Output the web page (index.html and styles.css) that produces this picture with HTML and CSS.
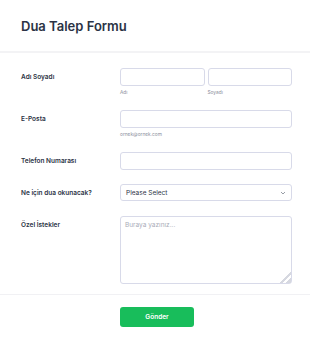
FILE: index.html
```html
<!DOCTYPE html>
<html lang="tr">
<head>
    <meta charset="UTF-8">
    <meta name="viewport" content="width=device-width, initial-scale=1.0">
    <link rel="stylesheet" href="styles.css">
</head>
<body>
    <div class="form-header">
        <h1>Dua Talep Formu</h1>
    </div>

    <form class="form-body">
        <div class="form-row">
            <label class="form-label">Adı Soyadı</label>
            <div class="form-field name-field">
                <div class="name-part">
                    <input type="text" class="form-input">
                    <span class="sublabel">Adı</span>
                </div>
                <div class="name-part">
                    <input type="text" class="form-input">
                    <span class="sublabel">Soyadı</span>
                </div>
            </div>
        </div>

        <div class="form-row">
            <label class="form-label">E-Posta</label>
            <div class="form-field">
                <input type="email" class="form-input">
                <span class="sublabel">ornek@ornek.com</span>
            </div>
        </div>

        <div class="form-row">
            <label class="form-label">Telefon Numarası</label>
            <div class="form-field">
                <input type="tel" class="form-input">
            </div>
        </div>

        <div class="form-row">
            <label class="form-label">Ne için dua okunacak?</label>
            <div class="form-field">
                <div class="form-select">
                    <span>Please Select</span>
                    <svg class="chevron" width="6" height="4" viewBox="0 0 6 4">
                        <path d="M1 1 L3 3 L5 1" fill="none" stroke="#6b7280" stroke-width="0.7"/>
                    </svg>
                </div>
            </div>
        </div>

        <div class="form-row">
            <label class="form-label">Özel İstekler</label>
            <div class="form-field">
                <textarea class="form-textarea" placeholder="Buraya yazınız..."></textarea>
            </div>
        </div>
    </form>

    <div class="form-footer">
        <button class="submit-button" type="button">Gönder</button>
    </div>
</body>
</html>
```

FILE: styles.css
```css
* {
    margin: 0;
    padding: 0;
    box-sizing: border-box;
    font-family: 'Inter', 'Noto Sans', sans-serif;
}
body {
    background: #ffffff;
    color: #2c3345;
    width: 310px;
}

/* Header */
.form-header {
    height: 53px;
    padding: 16px 21px 0;
    border-bottom: 2px solid #f3f3f5;
}
.form-header h1 {
    font-size: 13px;
    font-weight: 600;
    line-height: 20px;
    color: #2c3345;
}

/* Rows */
.form-body {
    padding: 15px 18px 10px 21px;
    border-bottom: 1px solid #f1f1f4;
}
.form-row {
    display: flex;
    margin-bottom: 14px;
}
.form-row:last-child {
    margin-bottom: 0;
}
.form-label {
    width: 99px;
    flex-shrink: 0;
    font-size: 6.5px;
    font-weight: 600;
    line-height: 18px;
    color: #2c3345;
}
.form-field {
    flex: 1;
    display: flex;
    flex-direction: column;
}
.name-field {
    flex-direction: row;
    gap: 3px;
}
.name-part {
    flex: 1;
    display: flex;
    flex-direction: column;
}
.form-input {
    height: 18px;
    width: 100%;
    border: 1px solid #d8dae9;
    border-radius: 3px;
    background: #fff;
    outline: none;
}
.sublabel {
    font-size: 4.8px;
    color: #8a8e9c;
    line-height: 7px;
    margin-top: 3px;
}

/* Select */
.form-select {
    height: 17px;
    border: 1px solid #d8dae9;
    border-radius: 3px;
    display: flex;
    align-items: center;
    justify-content: space-between;
    padding: 0 5px;
    font-size: 6.5px;
    color: #2c3345;
}
.chevron {
    display: block;
}

/* Textarea */
.form-textarea {
    display: block;
    height: 68px;
    width: 100%;
    border: 1px solid #d8dae9;
    border-radius: 3px;
    padding: 4px 4px;
    font-size: 6.5px;
    color: #2c3345;
    resize: vertical;
    outline: none;
}
.form-textarea::placeholder {
    color: #a9acb8;
}
.form-textarea::-webkit-resizer {
    background: linear-gradient(135deg, transparent 60%, #d6d8e0 60%, #d6d8e0 70%, transparent 70%, transparent 80%, #d6d8e0 80%);
}

/* Footer */
.form-footer {
    display: flex;
    padding: 12px 0 0 120px;
}
.submit-button {
    width: 74px;
    height: 20px;
    background: #18bd5b;
    color: #ffffff;
    border: none;
    border-radius: 3px;
    font-size: 6.5px;
    font-weight: 600;
    cursor: pointer;
}
```
